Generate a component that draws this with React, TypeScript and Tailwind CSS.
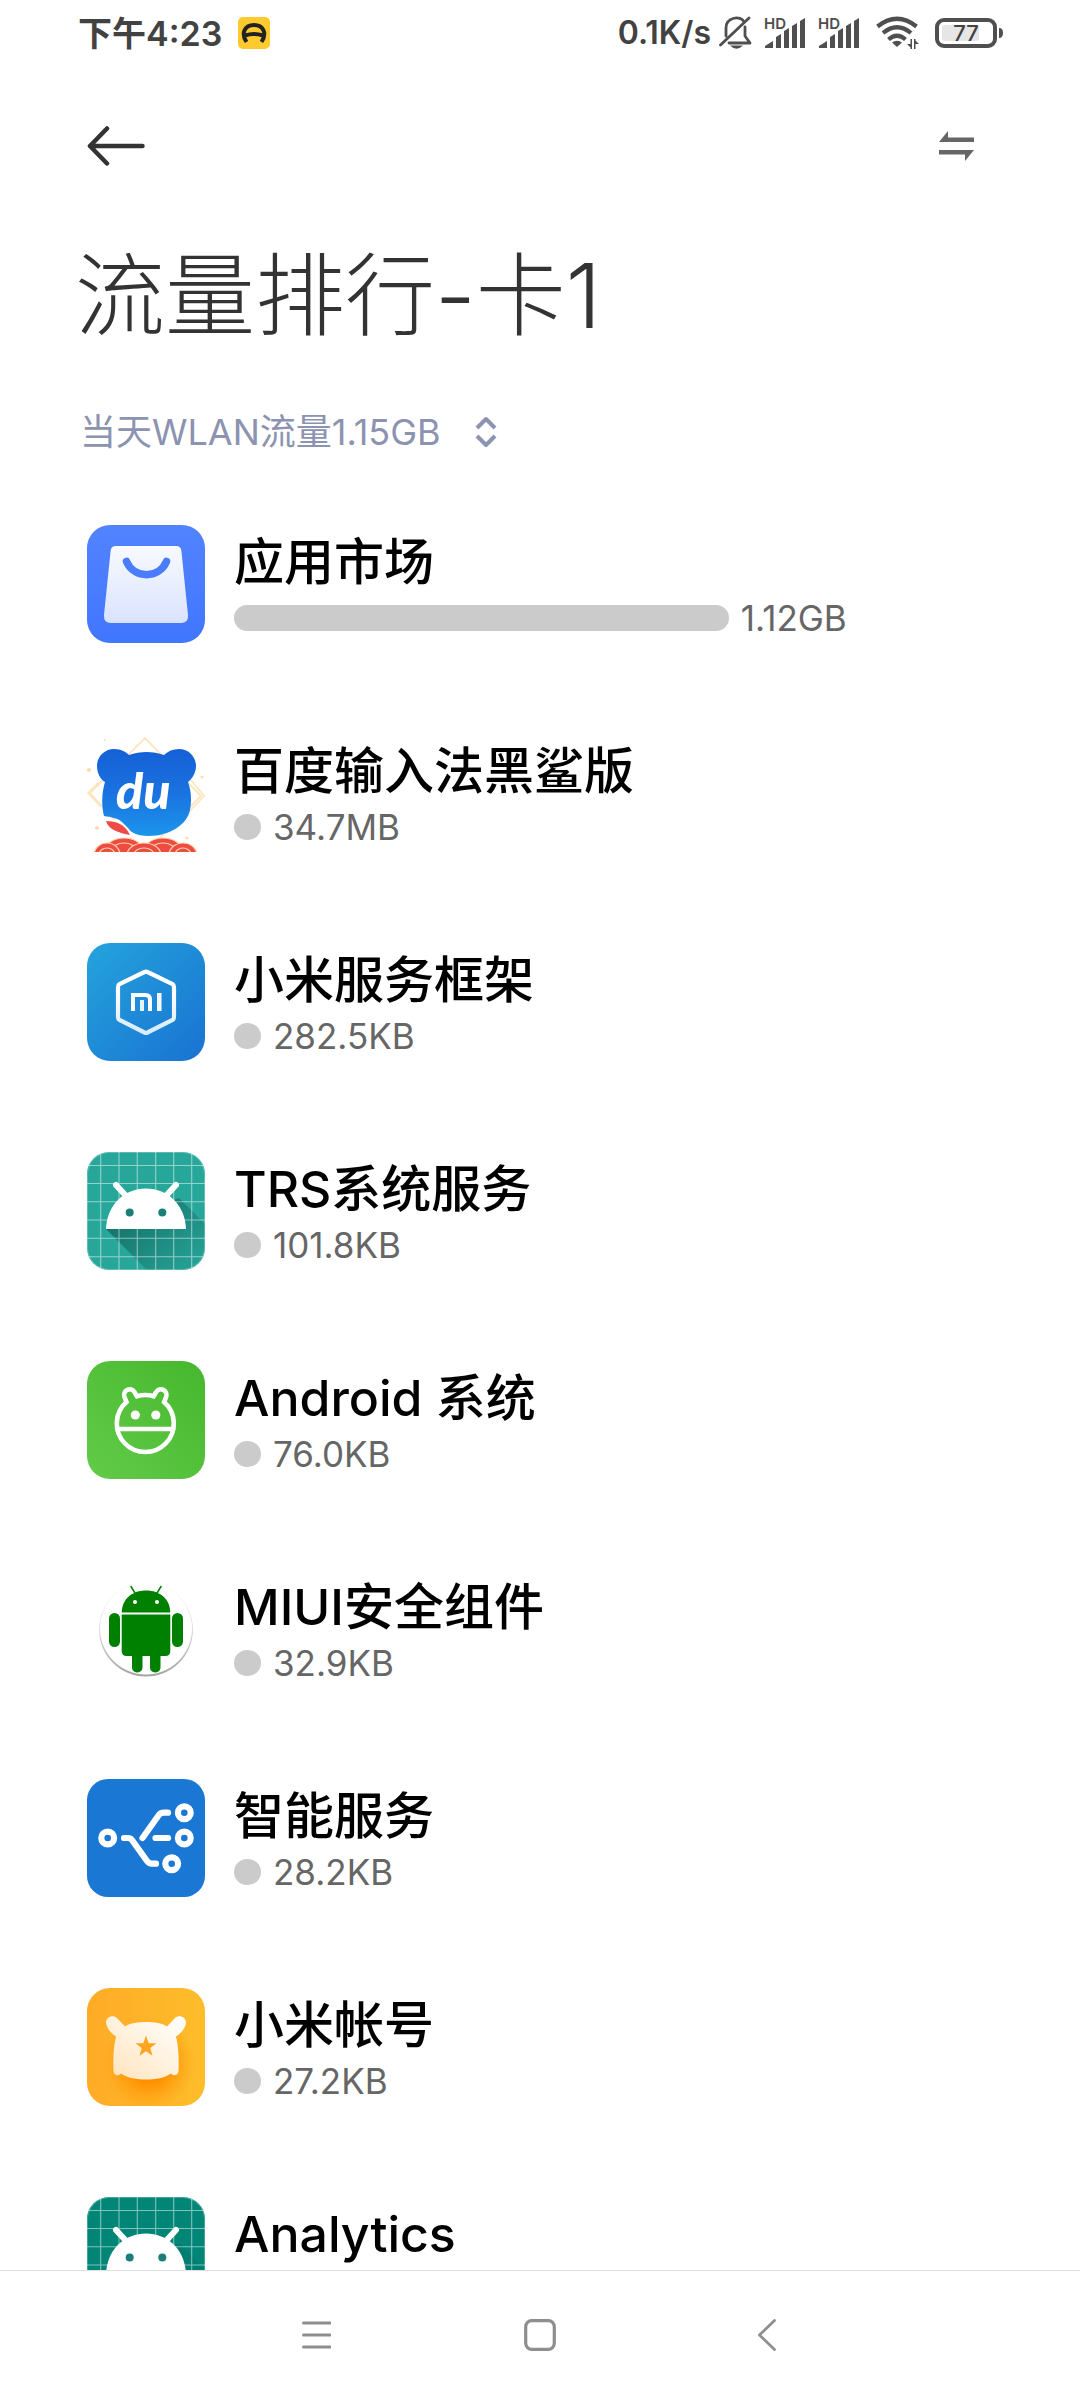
import { ReactNode, useState } from 'react'

interface AppUsage {
  name: string
  usage: string
  // share of the heaviest app, 0..1
  share: number
  icon: ReactNode
}

function MarketIcon() {
  return (
    <svg viewBox="0 0 118 118" className="size-full" aria-hidden="true">
      <defs>
        <linearGradient id="market-bg" x1="0" y1="0" x2="0" y2="1">
          <stop offset="0" stopColor="#5283ff" />
          <stop offset="1" stopColor="#4176ff" />
        </linearGradient>
        <linearGradient id="market-bag" x1="0" y1="0" x2="0" y2="1">
          <stop offset="0" stopColor="#f8faff" />
          <stop offset="1" stopColor="#dae3ff" />
        </linearGradient>
      </defs>
      <rect width="118" height="118" rx="23" fill="url(#market-bg)" />
      <path
        d="M29 21H89Q94 21 94.4 26L101 90Q101.500 98 94 98H24Q16.500 98 17 90L23.600 26Q24 21 29 21Z"
        fill="url(#market-bag)"
      />
      <path d="M39.500 36.500C47 54 72 54 79.500 36.500" fill="none" stroke="#4a7cff" strokeWidth="7.500" strokeLinecap="round" />
    </svg>
  )
}

function BaiduInputIcon() {
  return (
    <svg viewBox="0 0 118 118" className="size-full" aria-hidden="true">
      <defs>
        <linearGradient id="bear" x1="0" y1="0" x2="0" y2="1">
          <stop offset="0" stopColor="#1560d6" />
          <stop offset="0.500" stopColor="#1a72e0" />
          <stop offset="1" stopColor="#1c95ec" />
        </linearGradient>
        <clipPath id="bear-clip">
          <rect width="118" height="118" />
        </clipPath>
      </defs>
      <g clipPath="url(#bear-clip)">
        <g fill="none" stroke="#fbe6c0" strokeWidth="1.800">
          <path d="M58 4L114 62L58 119L3 59Z" />
          <path d="M12 48L1 59L14 73M104 46L117 62L100 80" />
        </g>
        <g fill="#f8dfae">
          <circle cx="2" cy="36" r="2" />
          <circle cx="115" cy="43" r="1.500" />
          <circle cx="10" cy="94" r="2" />
          <circle cx="18" cy="6" r="1" />
          <circle cx="100" cy="104" r="1.500" />
        </g>
        <path
          d="M27 15C34 15 39 18 42 21C53 17 66 17 77 21C81 17 86 15 92 15C102 15 109 23 109 32C109 39 105 45 101 48C104 56 105 66 103 76C100 91 82 102 62 102C48 102 43 98 37 90C32 84 24 83 17 82C14 70 15 58 18 48C13 45 10 39 10 32C10 22 18 15 27 15Z"
          fill="url(#bear)"
        />
        <text x="29" y="75" fontSize="50" fontFamily="Lato" fontWeight="900" fontStyle="italic" fill="#fff">
          du
        </text>
        <path d="M16 85C30 84 40 89 47 103C36 105 20 102 16 85Z" fill="#fff" />
        <path d="M19 87C29 87 38 90 43 101C34 99 22 97 19 87Z" fill="#ee4a48" />
        {/* red clouds */}
        <g fill="#ee4b43" stroke="#fbd3a6" strokeWidth="1.200">
          <ellipse cx="37" cy="117" rx="19" ry="13" />
          <ellipse cx="76" cy="117" rx="19" ry="13" />
          <ellipse cx="37" cy="117" rx="12" ry="8" />
          <ellipse cx="76" cy="117" rx="12" ry="8" />
          <ellipse cx="20" cy="121" rx="13" ry="12" />
          <ellipse cx="57" cy="121" rx="17" ry="12" />
          <ellipse cx="96" cy="121" rx="14" ry="12" />
          <ellipse cx="20" cy="121" rx="8" ry="7" />
          <ellipse cx="57" cy="121" rx="10" ry="7" />
          <ellipse cx="96" cy="121" rx="8" ry="7" />
        </g>
      </g>
    </svg>
  )
}

function MiFrameworkIcon() {
  return (
    <svg viewBox="0 0 118 118" className="size-full" aria-hidden="true">
      <defs>
        <linearGradient id="mi-bg" x1="0" y1="0" x2="1" y2="1">
          <stop offset="0" stopColor="#24a4dc" />
          <stop offset="1" stopColor="#1972d2" />
        </linearGradient>
        <linearGradient id="mi-line" gradientUnits="userSpaceOnUse" x1="0" y1="28" x2="0" y2="92">
          <stop offset="0.300" stopColor="#fff" />
          <stop offset="1" stopColor="#d6eafa" />
        </linearGradient>
      </defs>
      <rect width="118" height="118" rx="23" fill="url(#mi-bg)" />
      <path
        d="M57.500 29Q59 28.300 60.500 29L85.500 41Q87 42 87 44V74Q87 76 85.500 77L60.500 89.500Q59 90.200 57.500 89.500L32.500 77Q31 76 31 74V44Q31 42 32.500 41Z"
        fill="none"
        stroke="url(#mi-line)"
        strokeWidth="4.200"
      />
      <path d="M46 68V52H58.500Q63 52 63 56.500V68" fill="none" stroke="#fff" strokeWidth="4" />
      <rect x="53" y="57" width="4" height="11" fill="#e6f2fb" />
      <rect x="70" y="50" width="4.500" height="18" fill="#f4f9fd" />
    </svg>
  )
}

function DroidGridIcon({ id, color, shadow }: { id: string; color: string; shadow: number }) {
  return (
    <svg viewBox="0 0 118 118" className="size-full" aria-hidden="true">
      <defs>
        <clipPath id={`${id}-clip`}>
          <rect width="118" height="118" rx="22" />
        </clipPath>
        <linearGradient id={`${id}-shade`} gradientUnits="userSpaceOnUse" x1="45" y1="60" x2="100" y2="118">
          <stop offset="0" stopColor="#0d5c55" stopOpacity={shadow} />
          <stop offset="1" stopColor="#0d5c55" stopOpacity="0.080" />
        </linearGradient>
      </defs>
      <g clipPath={`url(#${id}-clip)`}>
        <rect width="118" height="118" fill={color} />
        <path d="M19 77L92 46L118 72V118H60Z" fill={`url(#${id}-shade)`} />
        <path
          d="M13.700 0V118M32 0V118M50.300 0V118M68.700 0V118M86.700 0V118M104.700 0V118M0 13.500H118M0 31.500H118M0 49.700H118M0 68H118M0 86.300H118M0 104.700H118"
          stroke="#fff"
          strokeOpacity="0.500"
          strokeWidth="1.100"
        />
        <rect x="0.500" y="0.500" width="117" height="117" rx="22" fill="none" stroke="#fff" strokeOpacity="0.250" />
      </g>
      <path d="M19 77C20 53 37 36.500 59 36.500S98 53 99 77Z" fill="#fff" />
      <path d="M29 33L41 46M89 33L77 46" stroke="#fff" strokeWidth="6" strokeLinecap="round" />
      <circle cx="42.700" cy="60.500" r="4" fill="#1b7f77" />
      <circle cx="75.300" cy="60.500" r="4" fill="#1b7f77" />
    </svg>
  )
}

function AndroidSystemIcon() {
  return (
    <svg viewBox="0 0 118 118" className="size-full" aria-hidden="true">
      <defs>
        <linearGradient id="sys-bg" x1="0" y1="1" x2="1" y2="0">
          <stop offset="0" stopColor="#62cb48" />
          <stop offset="1" stopColor="#46b72e" />
        </linearGradient>
      </defs>
      <rect width="118" height="118" rx="23" fill="url(#sys-bg)" />
      <g fill="none" stroke="#fff" strokeWidth="4.600">
        <path d="M50 35.200L47.300 30.800A5.600 5.600 0 0 0 37.300 35.500L39.500 41.100A28.500 28.500 0 1 0 77.100 41.100L79.300 35.500A5.600 5.600 0 0 0 69.300 30.800L66.600 35.200A28.500 28.500 0 0 0 50 35.200Z" />
        <path d="M31 68H86" />
      </g>
      <circle cx="48.300" cy="54" r="4.600" fill="#fff" />
      <circle cx="68.800" cy="54" r="4.600" fill="#fff" />
    </svg>
  )
}

function RobotIcon() {
  return (
    <svg viewBox="0 0 118 118" className="size-full" aria-hidden="true">
      <defs>
        <linearGradient id="robot-ring" x1="0" y1="0" x2="0" y2="1">
          <stop offset="0" stopColor="#f5f5f5" />
          <stop offset="0.500" stopColor="#dcdcdc" />
          <stop offset="1" stopColor="#a3a3a3" />
        </linearGradient>
      </defs>
      <circle cx="59" cy="59.500" r="47" fill="url(#robot-ring)" />
      <circle cx="59" cy="58.500" r="46" fill="#fff" />
      <g fill="#008000">
        <path d="M34.700 42.500C35 29 45 20.500 59 20.500S83 29 83.300 42.500Z" />
        <path d="M34.700 44.500H83.300V81Q83.300 86 78.300 86H39.700Q34.700 86 34.700 81Z" />
        <rect x="22" y="43" width="11" height="34" rx="5.500" />
        <rect x="85" y="43" width="11" height="34" rx="5.500" />
        <rect x="45" y="76" width="10.500" height="26.500" rx="5" />
        <rect x="63" y="76" width="10.500" height="26.500" rx="5" />
      </g>
      <path d="M43.700 16L48.500 24M74.300 16L69.500 24" stroke="#008000" strokeWidth="1.500" />
      <circle cx="48" cy="32" r="2" fill="#fff" />
      <circle cx="70" cy="32" r="2" fill="#fff" />
    </svg>
  )
}

function SmartServiceIcon() {
  return (
    <svg viewBox="0 0 118 118" className="size-full" aria-hidden="true">
      <rect width="118" height="118" rx="21" fill="#1a77d4" />
      <g fill="none" stroke="#fff" strokeWidth="6.200" strokeLinecap="round" strokeLinejoin="round">
        <circle cx="20.700" cy="59" r="6.400" />
        <circle cx="97.300" cy="33.700" r="6.400" />
        <circle cx="97.300" cy="59" r="6.400" />
        <circle cx="84.700" cy="84.700" r="6.400" />
        <path d="M37 59H41Q43.500 59 45 61L60 82Q62 84.700 65 84.700H69" />
        <path d="M55.500 59L71.500 36.500Q73.500 33.700 77 33.700H81" />
        <path d="M68.500 59H81" />
      </g>
    </svg>
  )
}

function MiAccountIcon() {
  return (
    <svg viewBox="0 0 118 118" className="size-full" aria-hidden="true">
      <defs>
        <linearGradient id="acc-bg" x1="0" y1="0" x2="1" y2="0">
          <stop offset="0" stopColor="#ffab27" />
          <stop offset="1" stopColor="#fdbd2a" />
        </linearGradient>
        <radialGradient id="acc-glow" gradientUnits="userSpaceOnUse" cx="62" cy="76" r="46">
          <stop offset="0.400" stopColor="#ff9100" />
          <stop offset="1" stopColor="#ff9f10" stopOpacity="0" />
        </radialGradient>
        <linearGradient id="acc-body" gradientUnits="userSpaceOnUse" x1="85" y1="30" x2="35" y2="92">
          <stop offset="0" stopColor="#fffdf9" />
          <stop offset="1" stopColor="#ffe6c2" />
        </linearGradient>
      </defs>
      <rect width="118" height="118" rx="23" fill="url(#acc-bg)" />
      <rect width="118" height="118" rx="23" fill="url(#acc-glow)" />
      <path
        d="M59 34C67 34 75 35 80 38.500L88 30C92 26 101 29 98.500 37C97 42 93 46 89 48.500C91.500 58 92 70 91.500 83C91 88 86 88 84 85.500C78 90 68 91.500 59 91.500S40 90 34 85.500C32 88 27 88 26.500 83C26 70 26.500 58 29 48.500C25 46 21 42 19.500 37C17 29 26 26 30 30L38 38.500C43 35 51 34 59 34Z"
        fill="url(#acc-body)"
      />
      <path d="M59 47.500L61.700 55.200H69.500L63.300 60L65.500 67.800L59 63.200L52.500 67.800L54.700 60L48.500 55.200H56.300Z" fill="#ffa51f" />
    </svg>
  )
}

const apps: AppUsage[] = [
  { name: '应用市场', usage: '1.12GB', share: 1, icon: <MarketIcon /> },
  { name: '百度输入法黑鲨版', usage: '34.7MB', share: 0.03, icon: <BaiduInputIcon /> },
  { name: '小米服务框架', usage: '282.5KB', share: 0, icon: <MiFrameworkIcon /> },
  { name: 'TRS系统服务', usage: '101.8KB', share: 0, icon: <DroidGridIcon id="trs" color="#27a69a" shadow={0.65} /> },
  { name: 'Android 系统', usage: '76.0KB', share: 0, icon: <AndroidSystemIcon /> },
  { name: 'MIUI安全组件', usage: '32.9KB', share: 0, icon: <RobotIcon /> },
  { name: '智能服务', usage: '28.2KB', share: 0, icon: <SmartServiceIcon /> },
  { name: '小米帐号', usage: '27.2KB', share: 0, icon: <MiAccountIcon /> },
  { name: 'Analytics', usage: '', share: 0, icon: <DroidGridIcon id="analytics" color="#008577" shadow={0.3} /> },
]

function SignalIcon() {
  return (
    <svg viewBox="0 0 42 32" className="h-8 w-[42px] overflow-visible" aria-hidden="true">
      <text x="0" y="12" fontSize="15" fontFamily="Inter" fontWeight="600" fill="#4d4d4d">
        HD
      </text>
      <path
        d="M1 31V29L9 24V31ZM12 31V20L17 17V31ZM20 31V14L25 11V31ZM28 31V9L33 6V31ZM36 31V4L41 1V31Z"
        fill="#4f4f4f"
      />
    </svg>
  )
}

function StatusBar() {
  return (
    <div className="flex h-[66px] shrink-0 items-center justify-between pr-[77px] pl-[78px] text-[34px] font-semibold text-[#424242]">
      <div className="flex items-center gap-4">
        <span className="whitespace-nowrap">下午4:23</span>
        <svg viewBox="0 0 32 32" className="size-8" aria-hidden="true">
          <rect width="32" height="32" rx="5" fill="#ffca2e" />
          <path d="M8.500 25C2.500 16 7 8 16 8S29.500 16 23.500 25M7 18.500Q16 15.500 25 18.500" fill="none" stroke="#222" strokeWidth="4" />
        </svg>
      </div>
      <div className="flex items-center gap-3">
        <span className="-mr-1 text-[32px] whitespace-nowrap">0.1K/s</span>
        <svg viewBox="0 0 33 34" className="h-[34px] w-[33px]" fill="none" stroke="#4f4f4f" strokeWidth="2.800" aria-hidden="true">
          <path d="M7 20V12C7 1 22 -1 25 6M26 11V20L31 27H10M1.500 29L30 2" strokeLinecap="round" strokeLinejoin="round" />
          <path d="M11 29.500H24Q17.500 36 11 29.500Z" fill="#4f4f4f" stroke="none" />
        </svg>
        <SignalIcon />
        <SignalIcon />
        <svg viewBox="0 0 43 34" className="ml-1 h-[34px] w-[43px]" aria-hidden="true">
          <g fill="none" stroke="#4f4f4f" strokeWidth="4.200">
            <path d="M1.500 10.500Q21 -5 40.500 10.500" />
            <path d="M7 17Q21 5.500 35 17" />
            <path d="M12.500 23.500Q21 16 29.500 23.500" />
          </g>
          <path d="M21 31L16 26.500Q21 23 26 26.500Z" fill="#4f4f4f" />
          <path d="M31 28H36V33ZM34.500 23H36V33H34.500ZM38 23H39.500V33H38ZM38 23L43 28H38Z" fill="#4f4f4f" />
        </svg>
        <svg viewBox="0 0 68 30" className="ml-1 h-[30px] w-[68px]" aria-hidden="true">
          <rect x="2" y="2" width="58" height="26" rx="7" fill="none" stroke="#4f4f4f" strokeWidth="4" />
          <rect x="7" y="7" width="37" height="16" rx="3" fill="#e6e6e6" />
          <path d="M64 10Q68 10 68 15T64 20Z" fill="#4f4f4f" />
          <text x="31" y="23" fontSize="22" fontFamily="Inter" fontWeight="500" fill="#424242" textAnchor="middle">
            77
          </text>
        </svg>
      </div>
    </div>
  )
}

function UsageRow({ app }: { app: AppUsage }) {
  return (
    <li className="flex items-center gap-[29px]">
      <div className="size-[118px] shrink-0">{app.icon}</div>
      <div className="flex min-w-0 flex-1 flex-col">
        <h2 className="text-[50px] leading-[68px] font-medium whitespace-nowrap text-black">{app.name}</h2>
        <div className="flex h-11 items-center gap-3">
          <div
            className="h-[26px] min-w-[27px] shrink-0 rounded-full bg-[#cbcbcb]"
            style={{ width: `${app.share * 65.2}%` }}
          />
          <span className="text-[35px] leading-[46px] whitespace-nowrap text-[#666666]">{app.usage}</span>
        </div>
      </div>
    </li>
  )
}

export default function App() {
  const [range, setRange] = useState('today')

  return (
    <div className="flex h-screen flex-col overflow-hidden bg-white font-['Inter','Noto_Sans_CJK_SC',sans-serif]">
      <StatusBar />

      <header className="flex h-40 shrink-0 items-center justify-between px-[87px]">
        <button type="button" aria-label="返回">
          <svg viewBox="0 0 58 40" className="h-10 w-[58px]" fill="none" stroke="#333" strokeWidth="4.500" strokeLinecap="round" strokeLinejoin="round" aria-hidden="true">
            <path d="M20 2.500L3 20L20 37.500M3 20H55.500" />
          </svg>
        </button>
        <button type="button" aria-label="切换" className="mr-[18px]">
          <svg viewBox="0 0 37 32" className="h-8 w-[37px]" fill="#666" aria-hidden="true">
            <path d="M10 1V7.500H36V12H1Z" />
            <path d="M27 31V24.500H1V20H36Z" />
          </svg>
        </button>
      </header>

      <main className="flex min-h-0 flex-1 flex-col overflow-hidden">
        <h1 className="px-[75px] text-[90px] leading-[140px] font-light whitespace-nowrap text-[#333333]">流量排行-卡1</h1>
        <div className="mt-9 flex items-center gap-[34px] px-20">
          <select
            aria-label="统计范围"
            value={range}
            onChange={(e) => setRange(e.target.value)}
            className="h-[60px] appearance-none bg-transparent text-[36px] text-[#8c93b0] outline-none"
          >
            <option value="today">当天WLAN流量1.15GB</option>
          </select>
          <svg viewBox="0 0 22 32" className="h-8 w-[22px]" fill="none" stroke="#8c93b0" strokeWidth="4" aria-hidden="true">
            <path d="M2 12L11 3L20 12M2 20L11 29L20 20" strokeLinejoin="round" />
          </svg>
        </div>
        <ul className="mt-[63px] flex flex-col gap-[91px] px-[87px]">
          {apps.map((app) => (
            <UsageRow key={app.name} app={app} />
          ))}
        </ul>
      </main>

      <nav className="flex h-[130px] shrink-0 items-center justify-around border-t border-[#e2e2e2] px-[202px] pb-0.5">
        <button type="button" aria-label="菜单">
          <svg viewBox="0 0 32 32" className="size-8" stroke="#8e8e8e" strokeWidth="3" strokeLinecap="round" aria-hidden="true">
            <path d="M4.500 4H31M4.500 16H31M4.500 28H31" />
          </svg>
        </button>
        <button type="button" aria-label="主页">
          <svg viewBox="0 0 32 32" className="size-8" fill="none" stroke="#8e8e8e" strokeWidth="3.200" aria-hidden="true">
            <rect x="1.700" y="1.700" width="28.600" height="28.600" rx="6" />
          </svg>
        </button>
        <button type="button" aria-label="后退">
          <svg viewBox="0 0 32 32" className="size-8" fill="none" stroke="#8e8e8e" strokeWidth="2.800" strokeLinecap="round" strokeLinejoin="round" aria-hidden="true">
            <path d="M25.500 1.500L10.500 16L25.500 30.500" />
          </svg>
        </button>
      </nav>
    </div>
  )
}
